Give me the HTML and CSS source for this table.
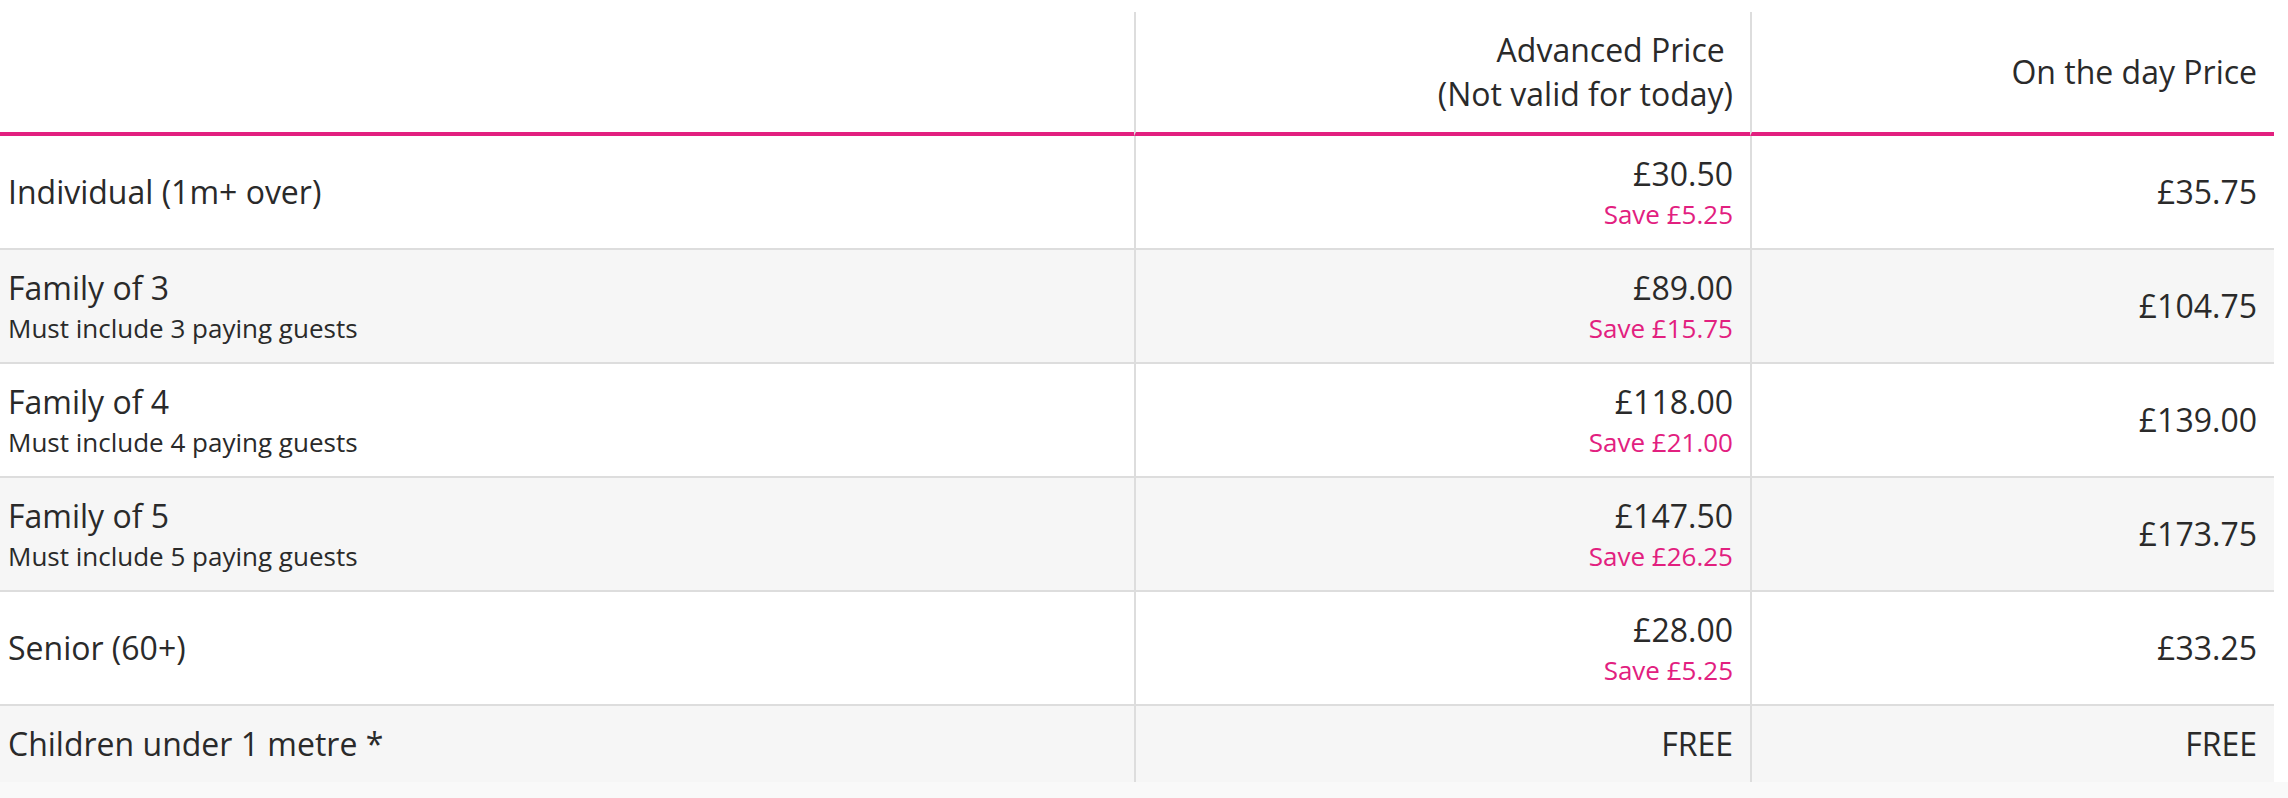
FILE: index.html
```html
<!DOCTYPE html>
<html lang="en">
<head>
<meta charset="utf-8">
<title>Prices</title>
<link rel="stylesheet" href="styles.css">
</head>
<body>
<div class="page">
  <table class="prices">
    <colgroup>
      <col class="c-type">
      <col class="c-adv">
      <col class="c-day">
    </colgroup>
    <thead>
      <tr>
        <th class="type"></th>
        <th class="num">Advanced Price&nbsp;<br>(Not valid for today)</th>
        <th class="num">On the day Price</th>
      </tr>
    </thead>
    <tbody>
      <tr>
        <td class="type">Individual (1m+ over)</td>
        <td class="num">£30.50<span class="save">Save £5.25</span></td>
        <td class="num">£35.75</td>
      </tr>
      <tr class="alt">
        <td class="type">Family of 3<span class="note">Must include 3 paying guests</span></td>
        <td class="num">£89.00<span class="save">Save £15.75</span></td>
        <td class="num">£104.75</td>
      </tr>
      <tr>
        <td class="type">Family of 4<span class="note">Must include 4 paying guests</span></td>
        <td class="num">£118.00<span class="save">Save £21.00</span></td>
        <td class="num">£139.00</td>
      </tr>
      <tr class="alt">
        <td class="type">Family of 5<span class="note">Must include 5 paying guests</span></td>
        <td class="num">£147.50<span class="save">Save £26.25</span></td>
        <td class="num">£173.75</td>
      </tr>
      <tr>
        <td class="type">Senior (60+)</td>
        <td class="num">£28.00<span class="save">Save £5.25</span></td>
        <td class="num">£33.25</td>
      </tr>
      <tr class="alt last">
        <td class="type strong">Children under 1 metre *</td>
        <td class="num">FREE</td>
        <td class="num">FREE</td>
      </tr>
    </tbody>
  </table>
</div>
</body>
</html>
```

FILE: styles.css
```css
html, body {
  margin: 0;
  padding: 0;
}
body {
  background: #f9f9f9;
  font-family: "Open Sans", "Liberation Sans", sans-serif;
  color: #2a2a2a;
  height: 798px;
  overflow: hidden;
}
.page {
  background: #fff;
  padding-top: 12px;
}
.prices {
  width: 2274px;
  table-layout: fixed;
  border-collapse: separate;
  border-spacing: 0;
  font-size: 32px;
  line-height: 44px;
}
.c-type { width: 1134px; }
.c-adv { width: 616px; }
.c-day { width: 524px; }

.prices th,
.prices td {
  padding: 16px 18px 16px 8px;
  vertical-align: middle;
  font-weight: 400;
}
.prices th.num,
.prices td.num {
  text-align: right;
  border-left: 2px solid #ddd;
  padding-right: 17px;
}
.prices th {
  border-bottom: 4px solid #e2207f;
}
.prices td {
  border-bottom: 2px solid #ddd;
}
.prices td.type {
  text-align: left;
}
.prices tr.last td {
  border-bottom: none;
}
.prices tr.alt td {
  background: #f6f6f6;
}
.save,
.note {
  display: block;
  font-size: 26px;
  line-height: 36px;
}
.save {
  color: #e2207f;
}
.note {
  color: #2a2a2a;
}
.strong {
  font-weight: 600;
}
```
